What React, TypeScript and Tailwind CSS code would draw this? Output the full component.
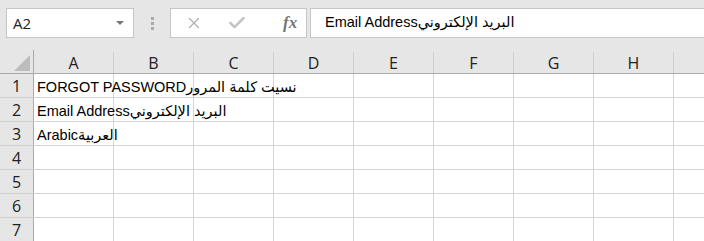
import { X, Check } from "lucide-react"

const cols = ["A", "B", "C", "D", "E", "F", "G", "H", ""]
const rows: Record<number, string> = {
  1: "FORGOT PASSWORDنسيت كلمة المرور",
  2: "Email Addressالبريد الإلكتروني",
  3: "Arabicالعربية",
}

const cellFont = { fontFamily: '"Liberation Sans", "DejaVu Sans", sans-serif' }

export default function App() {
  return (
    <div className="w-[704px] h-[241px] overflow-hidden bg-[#e6e6e6] text-[#222]" style={{ fontFamily: '"Open Sans", "DejaVu Sans", sans-serif' }}>
      {/* toolbar: name box + formula bar */}
      <div className="h-[50px] flex items-start pt-[8px] pl-[6px]">
        <div className="w-[128px] h-[30px] bg-white border border-[#c6c6c6] flex items-center justify-between pl-[6px] pr-[9px]">
          <span className="text-[15px] leading-none">A2</span>
          <span className="w-0 h-0 border-l-[4px] border-r-[4px] border-t-[4px] border-l-transparent border-r-transparent border-t-[#777]" />
        </div>
        <div className="w-[36px] h-[30px] flex flex-col items-center justify-center gap-[2px]">
          <span className="w-[3px] h-[3px] bg-[#aaa]" />
          <span className="w-[3px] h-[3px] bg-[#aaa]" />
          <span className="w-[3px] h-[3px] bg-[#aaa]" />
        </div>
        <div className="w-[137px] h-[30px] bg-white border border-[#c6c6c6] flex items-center pl-[14px] gap-[20px]">
          <X size={18} strokeWidth={1.6} className="text-[#b0b0b0]" />
          <Check size={20} strokeWidth={3} className="text-[#c4c4c4] ml-[4px]" />
          <span className="ml-[16px] text-[17px] italic font-bold text-[#777]" style={{ fontFamily: '"Liberation Serif", serif' }}>fx</span>
        </div>
        <div className="ml-[3px] flex-1 h-[30px] bg-white border border-r-0 border-[#c6c6c6] flex items-center pl-[14px]">
          <span className="text-[14.5px] text-black" style={cellFont}>Email Addressالبريد الإلكتروني</span>
        </div>
      </div>

      {/* column headers */}
      <div className="flex h-[24px] border-b border-[#ababab]">
        <div className="w-[34px] shrink-0 border-r border-[#ababab] relative">
          <svg className="absolute right-[3px] bottom-[2px]" width="16" height="16" viewBox="0 0 16 16">
            <polygon points="16,0 16,16 0,16" fill="#bdbdbd" />
          </svg>
        </div>
        {cols.map((c, i) => (
          <div key={i} className="w-[80px] shrink-0 border-r border-[#d0d0d0] flex items-center justify-center text-[16px] mt-[2px]">
            {c}
          </div>
        ))}
      </div>

      {/* rows */}
      {[1, 2, 3, 4, 5, 6, 7].map((r) => (
        <div key={r} className="flex h-[24px]">
          <div className="w-[34px] shrink-0 border-r border-b border-r-[#ababab] border-b-[#d0d0d0] flex items-center justify-center text-[16px]">
            {r}
          </div>
          <div className="relative flex">
            {cols.map((_, i) => (
              <div key={i} className="w-[80px] h-[24px] shrink-0 bg-white border-r border-b border-[#d4d4d4]" />
            ))}
            {rows[r] && (
              <span className="absolute left-[3px] top-[3px] text-[14.5px] text-black whitespace-nowrap" style={cellFont}>
                {rows[r]}
              </span>
            )}
          </div>
        </div>
      ))}
    </div>
  )
}
